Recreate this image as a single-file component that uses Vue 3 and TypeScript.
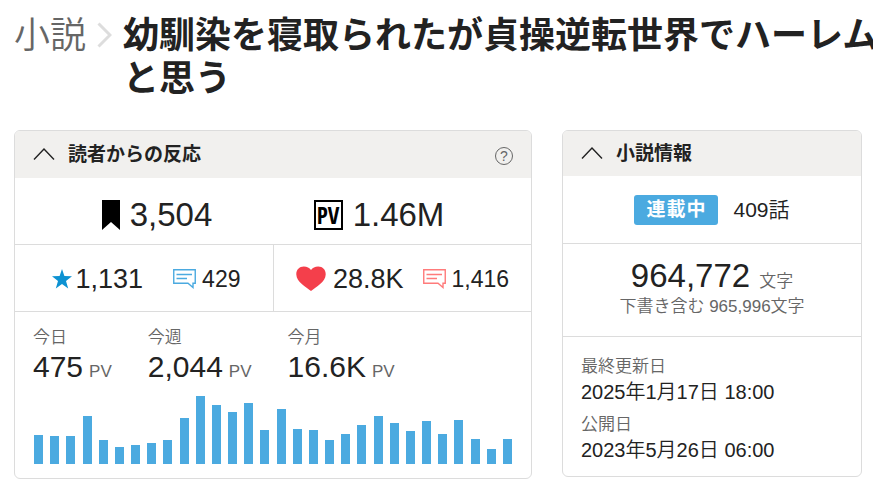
<script setup lang="ts">
import { ref } from 'vue'

interface PeriodCount {
  label: string
  value: string
}

const reactionsOpen = ref(true)
const infoOpen = ref(true)

const periods: PeriodCount[] = [
  { label: '今日', value: '475' },
  { label: '今週', value: '2,044' },
  { label: '今月', value: '16.6K' },
]

const dailyViews: number[] = [
  29, 28, 28, 48, 24, 17, 19, 21, 24, 46, 68, 59, 52, 61, 34,
  55, 35, 34, 24, 30, 39, 48, 41, 33, 43, 30, 44, 25, 15, 25,
]
const peak = Math.max(...dailyViews)
</script>

<template>
  <div class="page">
    <header class="heading">
      <a class="crumb" href="#">小説</a>
      <svg class="crumb-arrow" viewBox="0 0 15 26" aria-hidden="true">
        <path d="M1.5 1.5 L13 13 L1.5 24.5" />
      </svg>
      <h1 class="title">幼馴染を寝取られたが貞操逆転世界でハーレム<br>と思う</h1>
    </header>

    <main class="panels">
      <section class="panel reactions">
        <div class="panel-head head-tall">
          <button class="toggle" type="button" :aria-expanded="reactionsOpen" @click="reactionsOpen = !reactionsOpen">
            <svg class="chevron" viewBox="0 0 22 13" aria-hidden="true"><path d="M1 11.5 L11 1 L21 11.5" /></svg>
            <span>読者からの反応</span>
          </button>
          <button class="help" type="button">?</button>
        </div>

        <template v-if="reactionsOpen">
          <div class="row totals">
            <div class="cell">
              <svg class="bookmark" viewBox="0 0 18 30" aria-hidden="true"><path d="M0 0 H18 V30 L9 22 L0 30 Z" /></svg>
              <span class="big">3,504</span>
            </div>
            <div class="cell">
              <span class="pv-icon">PV</span>
              <span class="big">1.46M</span>
            </div>
          </div>

          <div class="row ratings">
            <div class="cell stars">
              <span class="stat">
                <svg class="star" viewBox="0 0 20 20" aria-hidden="true">
                  <path d="M10 0 L12.4 7.1 L20 7.3 L14 11.9 L16.2 19.6 L10 15.1 L3.8 19.6 L6 11.9 L0 7.3 L7.6 7.1 Z" />
                </svg>
                <span class="medium">1,131</span>
              </span>
              <span class="stat comments">
                <svg class="bubble blue" viewBox="0 0 23 20" aria-hidden="true">
                  <path d="M.75 .75 H22.25 V14.25 H20 V18.5 L15 14.25 H.75 Z" /><path d="M3.5 5.5 H19 M3.5 9.5 H14" />
                </svg>
                <span class="small">429</span>
              </span>
            </div>
            <div class="cell hearts">
              <span class="stat heart-stat">
                <svg class="heart" viewBox="0 0 30 25" aria-hidden="true">
                  <path d="M15 25 C10 21 .5 16 .3 8.5 C.1 3.5 3.5 .5 7.8 .5 C11 .5 13.5 1.8 15 4 C16.5 1.8 19 .5 22.2 .5 C26.5 .5 29.9 3.5 29.7 8.5 C29.5 16 20 21 15 25 Z" />
                </svg>
                <span class="medium">28.8K</span>
              </span>
              <span class="stat comments">
                <svg class="bubble red" viewBox="0 0 23 20" aria-hidden="true">
                  <path d="M.75 .75 H22.25 V14.25 H20 V18.5 L15 14.25 H.75 Z" /><path d="M3.5 5.5 H19 M3.5 9.5 H14" />
                </svg>
                <span class="small">1,416</span>
              </span>
            </div>
          </div>

          <div class="views">
            <dl class="periods">
              <div v-for="p in periods" :key="p.label">
                <dt>{{ p.label }}</dt>
                <dd><span>{{ p.value }}</span><span class="unit">PV</span></dd>
              </div>
            </dl>
            <div class="chart" role="img" aria-label="日別PV">
              <span v-for="(v, i) in dailyViews" :key="i" class="bar" :style="{ height: (v / peak) * 100 + '%' }"></span>
            </div>
          </div>
        </template>
      </section>

      <section class="panel info">
        <div class="panel-head">
          <button class="toggle" type="button" :aria-expanded="infoOpen" @click="infoOpen = !infoOpen">
            <svg class="chevron" viewBox="0 0 22 13" aria-hidden="true"><path d="M1 11.5 L11 1 L21 11.5" /></svg>
            <span>小説情報</span>
          </button>
        </div>

        <template v-if="infoOpen">
          <div class="row status">
            <span class="badge">連載中</span>
            <span class="episodes">409話</span>
          </div>
          <div class="row length">
            <p class="count"><span>964,772</span><span class="unit">文字</span></p>
            <p class="draft">下書き含む 965,996文字</p>
          </div>
          <dl class="dates">
            <dt>最終更新日</dt>
            <dd>2025年1月17日 18:00</dd>
            <dt>公開日</dt>
            <dd>2023年5月26日 06:00</dd>
          </dl>
        </template>
      </section>
    </main>
  </div>
</template>

<style>
body {
  background: #fff;
  overflow-x: hidden;
}
</style>

<style scoped>
.page {
  color: #222;
  font-family: "Liberation Sans", "Noto Sans CJK JP", sans-serif;
  font-weight: 350;
  overflow: hidden;
}
svg {
  display: block;
  flex: none;
}
h1, p, dl, dt, dd {
  margin: 0;
}
button {
  padding: 0;
  border: 0;
  background: none;
  color: inherit;
  font: inherit;
  cursor: pointer;
}

.heading {
  display: flex;
  align-items: flex-start;
  padding: 14px 0 0 14px;
  font-size: 36px;
  line-height: 43px;
  white-space: nowrap;
}
.crumb {
  color: #666;
  text-decoration: none;
}
.crumb-arrow {
  width: 15px;
  height: 26px;
  margin: 8px 11px 0;
  fill: none;
  stroke: #ddd;
  stroke-width: 3;
}
.title {
  font-size: 36px;
  font-weight: 700;
}

.panels {
  display: flex;
  align-items: flex-start;
  gap: 30px;
  padding: 30px 11px 13px 14px;
}
.panel {
  border: 1px solid #dcdcdc;
  border-radius: 6px;
  box-sizing: border-box;
  overflow: hidden;
}
.reactions {
  flex: 1;
  min-width: 0;
}
.info {
  flex: 0 0 300px;
}
.panel-head {
  display: flex;
  justify-content: space-between;
  align-items: center;
  height: 45px;
  padding: 0 18px;
  background: #f1f0ee;
}
.head-tall {
  height: 47px;
}
.toggle {
  display: flex;
  align-items: center;
  gap: 13px;
  font-size: 19px;
  font-weight: 700;
  line-height: 28px;
}
.chevron {
  width: 22px;
  height: 13px;
  fill: none;
  stroke: #222;
  stroke-width: 1.4;
}
.help {
  box-sizing: border-box;
  width: 18px;
  height: 18px;
  margin-top: 3px;
  border: 1px solid #666;
  border-radius: 50%;
  color: #666;
  font-size: 14px;
  line-height: 16px;
  text-align: center;
}

.row {
  border-bottom: 1px solid #dcdcdc;
}
.totals,
.ratings {
  display: grid;
  grid-template-columns: 1fr 1fr;
  height: 66px;
}
.cell {
  display: flex;
  align-items: center;
  justify-content: center;
}
.totals .cell {
  gap: 10px;
  padding-top: 7px;
}
.totals .cell:first-child {
  padding-left: 26px;
}
.totals .cell:last-child {
  padding-right: 46px;
}
.big {
  font-size: 33px;
  line-height: 40px;
}
.bookmark {
  width: 18px;
  height: 30px;
}
.pv-icon {
  display: flex;
  align-items: center;
  justify-content: center;
  box-sizing: border-box;
  width: 29px;
  height: 30px;
  border: 2px solid #000;
  color: #000;
  font-family: "Liberation Sans Narrow", "Open Sans Condensed", "Roboto Condensed", "Liberation Sans", sans-serif;
  font-size: 23px;
  font-stretch: condensed;
  font-weight: 700;
  line-height: 26px;
}
.stars {
  gap: 30px;
  padding-left: 4px;
}
.hearts {
  gap: 19px;
  border-left: 1px solid #dcdcdc;
}
.ratings .cell {
  padding-top: 1px;
}
.stat {
  display: flex;
  align-items: center;
  gap: 4px;
}
.heart-stat {
  gap: 7px;
}
.comments {
  gap: 6px;
}
.medium {
  font-size: 27px;
  line-height: 32px;
}
.small {
  font-size: 23px;
  line-height: 32px;
}
.star {
  width: 20px;
  height: 20px;
  fill: #0d92d2;
}
.heart {
  width: 30px;
  height: 25px;
  fill: #f43f4b;
}
.bubble {
  width: 23px;
  height: 20px;
  fill: none;
  stroke-width: 1.4;
}
.blue {
  stroke: #4baae0;
}
.red {
  stroke: #ff7b7b;
}

.views {
  padding: 13px 19px 14px 18px;
}
.periods {
  display: flex;
  gap: 36px;
}
.periods dt {
  color: #666;
  font-size: 17px;
  line-height: 25px;
}
.periods dd {
  display: flex;
  align-items: baseline;
  gap: 6px;
  font-size: 30px;
  line-height: 34px;
}
.unit {
  color: #666;
  font-size: 17px;
  line-height: 20px;
}
.chart {
  display: flex;
  align-items: flex-end;
  justify-content: space-between;
  height: 68px;
  margin: 12px 0 0 1px;
}
.bar {
  width: 9px;
  background: #4baae0;
}

.status {
  display: flex;
  align-items: center;
  justify-content: center;
  gap: 15px;
  height: 67px;
}
.badge {
  padding: 0 12px;
  border-radius: 3px;
  background: #4baae0;
  color: #fff;
  font-size: 19px;
  font-weight: 700;
  letter-spacing: 1px;
  line-height: 30px;
}
.episodes {
  font-size: 21px;
  line-height: 30px;
}
.length {
  padding: 14px 0 16px;
  text-align: center;
}
.count {
  display: flex;
  align-items: baseline;
  justify-content: center;
  gap: 9px;
  font-size: 33px;
  line-height: 36px;
}
.draft {
  color: #666;
  font-size: 17px;
  line-height: 26px;
}
.dates {
  padding: 17px 18px 14px;
}
.dates dt {
  color: #666;
  font-size: 17px;
  line-height: 26px;
}
.dates dd {
  font-size: 20px;
  line-height: 24px;
}
.dates dd + dt {
  margin-top: 8px;
}
</style>
